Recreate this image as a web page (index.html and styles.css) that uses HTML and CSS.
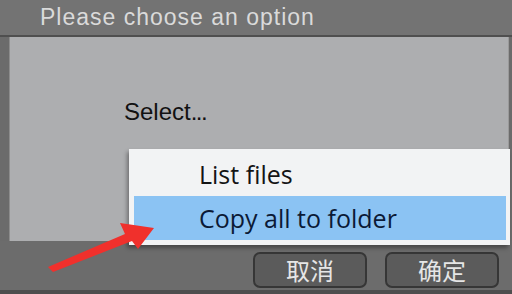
FILE: index.html
```html
<!DOCTYPE html>
<html lang="en">
<head>
  <meta charset="UTF-8">
  <meta name="viewport" content="width=device-width, initial-scale=1.0">
  <title>Please choose an option</title>
  <link rel="stylesheet" href="styles.css">
</head>
<body>
  <div class="dialog">
    <div class="titlebar">Please choose an option</div>
    <div class="content">
      <p class="prompt">Select<span class="dots">...</span></p>
    </div>
    <div class="footer">
      <button class="btn">取消</button>
      <button class="btn">确定</button>
    </div>

    <ul class="menu">
      <li class="menu-item">List files</li>
      <li class="menu-item active">Copy all to folder</li>
    </ul>

    <svg class="arrow" width="512" height="294" viewBox="0 0 512 294">
      <polygon points="48,267 125,234 120,223 154,228 138,249 132,241 53,272" fill="#f0302c"/>
    </svg>
  </div>
</body>
</html>
```

FILE: styles.css
```css
body {
  margin: 0;
  background-color: #6b6b6b;
  font-family: "Liberation Sans", Arial, sans-serif;
  overflow: hidden;
}

.dialog {
  position: relative;
  width: 512px;
  height: 294px;
  display: flex;
  flex-direction: column;
}

.titlebar {
  height: 35px;
  line-height: 34px;
  padding-left: 40px;
  background-color: #737373;
  color: #dadada;
  font-size: 23px;
  letter-spacing: 1px;
  border-bottom: 2px solid #4f4f4f;
}

.content {
  height: 204px;
  margin: 0 3px 0 9px;
  background-color: #adaeb0;
  border-left: 1px solid #8c8c8c;
  border-right: 1px solid #9a9a9a;
}

.prompt {
  margin: 0;
  padding: 61px 0 0 114px;
  font-size: 24px;
  color: #111;
}

.dots {
  letter-spacing: -1.5px;
}

.footer {
  flex: 1;
  display: flex;
  justify-content: flex-end;
  align-items: flex-start;
  gap: 18px;
  padding: 11px 13px 0 0;
  background-color: #6c6c6c;
  border-bottom: 4px solid #4e4e4e;
}

.btn {
  width: 114px;
  height: 36px;
  background-color: #5b5b5b;
  border: 2px solid #363636;
  border-radius: 7px;
  color: #e6e6e6;
  font-family: "Noto Sans CJK SC", sans-serif;
  font-size: 24px;
  line-height: 30px;
  padding: 0;
}

.menu {
  position: absolute;
  left: 129px;
  top: 149px;
  width: 372px;
  margin: 0;
  padding: 3px 4px 5px 5px;
  list-style: none;
  background-color: #f2f3f4;
  box-shadow: -2px 3px 4px rgba(0, 0, 0, 0.35);
}

.menu-item {
  height: 44px;
  line-height: 44px;
  padding-left: 65px;
  font-family: "Open Sans", sans-serif;
  font-size: 25px;
  color: #141414;
}

.menu-item.active {
  background-color: #8bc3f3;
  color: #0b1a36;
}

.arrow {
  position: absolute;
  left: 0;
  top: 0;
  pointer-events: none;
}
```
